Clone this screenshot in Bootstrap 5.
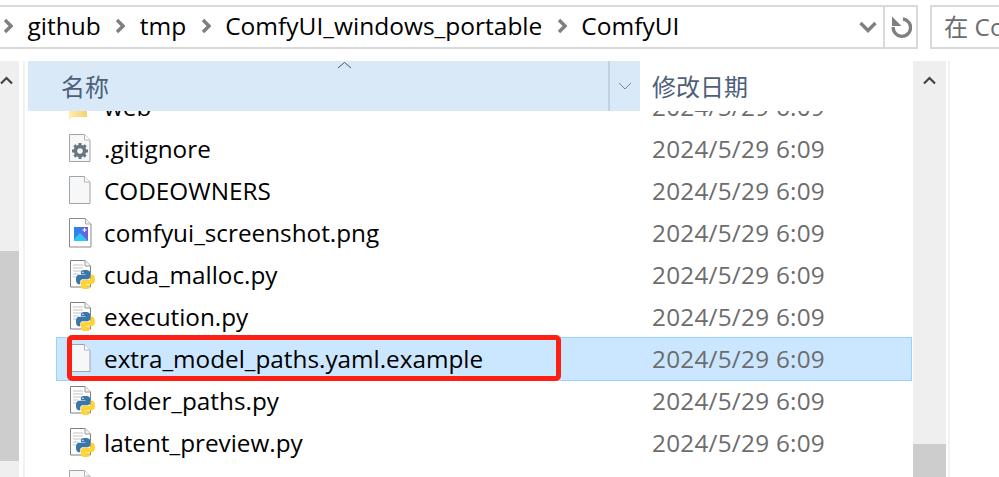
<!DOCTYPE html>
<html lang="zh">
<head>
    <meta charset="UTF-8">
    <meta name="viewport" content="width=device-width, initial-scale=1.0">
    <title>ComfyUI</title>
    <link href="https://cdn.jsdelivr.net/npm/bootstrap@5.3.0/dist/css/bootstrap.min.css" rel="stylesheet">
    <style>
        html, body {
            height: 477px;
            overflow: hidden;
        }
        body {
            background-color: #fff;
            color: #000;
            font-family: "Open Sans", "Noto Sans CJK SC", sans-serif;
            font-size: 24.3px;
        }
        .top-strip {
            height: 61px;
            padding-top: 5px;
        }
        .addr-box {
            width: 918px;
            height: 44px;
            flex: none;
            border: 2px solid #d9d9d9;
            border-left: 0;
        }
        .crumb-sep {
            width: 10px;
            height: 16px;
            flex: none;
        }
        .crumb-list {
            padding-left: 3px;
            padding-bottom: 2px;
            gap: 14.5px;
            font-size: 24.5px;
            white-space: nowrap;
        }
        .addr-tools {
            width: 33px;
            border-left: 2px solid #d9d9d9;
        }
        .addr-menu {
            margin-right: 6px;
        }
        .search-box {
            width: 69px;
            height: 44px;
            flex: none;
            margin-left: 12px;
            border: 2px solid #d9d9d9;
            border-right: 0;
            padding-left: 12px;
            color: #6d6d6d;
            white-space: nowrap;
            overflow: hidden;
        }
        .main-area {
            height: 416px;
        }
        .side-bar {
            width: 19px;
            background-color: #efefef;
        }
        .side-thumb {
            height: 210px;
            margin-top: 190px;
            background-color: #cdcdcd;
        }
        .side-line {
            width: 2px;
            margin-left: 4px;
            margin-right: 3px;
            background-color: #f2f2f2;
        }
        .list-pane {
            width: 885px;
        }
        .col-head {
            height: 50px;
            position: relative;
            z-index: 1;
            background-color: #fff;
        }
        .name-head {
            width: 612px;
            background-color: #d9e9f8;
            color: #4c607a;
            padding-left: 33px;
        }
        .sort-mark {
            position: absolute;
            left: 309px;
            top: 0;
            width: 15px;
            height: 9px;
        }
        .drop-cell {
            width: 32px;
            height: 50px;
            border-left: 2px solid #bfd3e6;
        }
        .date-head {
            padding-left: 12px;
            color: #4c607a;
        }
        .head-text {
            font-size: 24px;
            line-height: 52px;
        }
        .row-list {
            margin-top: -25px;
            margin-left: 28px;
            margin-right: 1px;
        }
        .file-row {
            height: 42px;
            border: 1px solid transparent;
            padding-left: 12px;
            white-space: nowrap;
        }
        .file-row.is-picked {
            height: 44px;
            margin: -1px 0;
            background-color: #cbe6ff;
            border-color: #99d1ff;
        }
        .file-ico {
            width: 26px;
            height: 30px;
            flex: none;
            margin-right: 9px;
        }
        .file-name {
            width: 548px;
            flex: none;
        }
        .file-date {
            color: #6d6d6d;
            letter-spacing: .25px;
        }
        .right-bar {
            width: 33px;
            background-color: #efefef;
        }
        .right-thumb {
            height: 33px;
            margin-top: 383px;
            background-color: #cdcdcd;
        }
        .bar-arrow {
            position: absolute;
            width: 13px;
            height: 9px;
        }
        .arrow-left { left: 0; top: 76px; }
        .arrow-right { left: 923px; top: 76px; }
        .right-line {
            width: 2px;
            margin-left: 2px;
            background-color: #f2f2f2;
        }
        .red-frame {
            position: absolute;
            left: 67px;
            top: 335px;
            width: 494px;
            height: 46px;
            border: 5px solid #ff1f12;
            border-radius: 5px;
            z-index: 2;
        }
    </style>
</head>
<body>
    <svg width="0" height="0" class="position-absolute">
        <defs>
            <linearGradient id="picFill" x1="0" y1="0" x2="1" y2="0">
                <stop offset="0" stop-color="#1c8cf2"/>
                <stop offset="1" stop-color="#7a5ad8"/>
            </linearGradient>
            <linearGradient id="folderFill" x1="0" y1="0" x2="1" y2="0">
                <stop offset="0" stop-color="#ffeeb0"/>
                <stop offset="1" stop-color="#f5d26a"/>
            </linearGradient>
            <symbol id="sep" viewBox="0 0 10 16"><path d="M2 2l6 6-6 6" fill="none" stroke="#7f7f7f" stroke-width="3.400"/></symbol>
            <symbol id="blank" viewBox="0 0 26 30">
                <path d="M.5 .5h15l5.500 5.500v21.500h-20.500z" fill="#f6f7f8" stroke="#a3a3a3"/>
                <path d="M15.500 .5v5.500h5.500" fill="#fff" stroke="#b5b5b5"/>
            </symbol>
            <symbol id="gear" viewBox="0 0 26 30">
                <use href="#blank" width="26" height="30"/>
                <circle cx="11" cy="17" r="4.500" fill="none" stroke="#66777f" stroke-width="3.400"/>
                <path d="M11 9v16M3 17h16M5.300 11.300l11.400 11.400M16.700 11.300L5.300 22.700" stroke="#66777f" stroke-width="3" stroke-dasharray="3 10"/>
            </symbol>
            <symbol id="pic" viewBox="0 0 26 30">
                <path d="M.5 .5h16l5.500 5.500v23h-21.500z" fill="#fff" stroke="#8a8a8a"/>
                <path d="M16.500 .5v5.500h5.500" fill="#f4f4f4" stroke="#aaa"/>
                <rect x="5" y="9" width="14" height="14" fill="url(#picFill)"/>
                <path d="M5 21l6-6 8 8H5z" fill="#2cc6f4"/>
                <path d="M13.500 12h4M15.500 10v4" stroke="#fff" stroke-width="1.200"/>
            </symbol>
            <symbol id="snake" viewBox="0 0 24 24">
                <path d="M11.900 0C5.800 0 6.200 2.600 6.200 2.600v2.700H12v.8H3.900S0 5.700 0 11.900s3.400 6 3.400 6h2V15s-.1-3.400 3.400-3.400h5.700s3.200.1 3.200-3.100V3.200S18.200 0 11.900 0zM8.700 1.800a1 1 0 1 1 0 2.100 1 1 0 0 1 0-2.100z" fill="#3a76a8" fill-rule="evenodd"/>
                <path transform="rotate(180 12 12)" d="M11.900 0C5.800 0 6.200 2.600 6.200 2.600v2.700H12v.8H3.900S0 5.700 0 11.900s3.400 6 3.400 6h2V15s-.1-3.400 3.400-3.400h5.700s3.200.1 3.200-3.100V3.200S18.200 0 11.900 0zM8.700 1.800a1 1 0 1 1 0 2.100 1 1 0 0 1 0-2.100z" fill="#ffd43b" fill-rule="evenodd"/>
            </symbol>
            <symbol id="py" viewBox="0 0 26 30">
                <path d="M1.500 .5h14.500l5.500 5.500v21h-20z" fill="#fff" stroke="#7f7f7f"/>
                <path d="M16 .5v5.500h5.500" fill="#f4f4f4" stroke="#999"/>
                <path d="M4 5h10M4 8h10M4 11h14M4 14h5M4 17h3" stroke="#c4c4c4"/>
                <use href="#snake" x="7" y="10" width="19" height="19"/>
            </symbol>
            <symbol id="folder" viewBox="0 0 26 30">
                <path d="M0 18h18v7H3l-3 3z" fill="url(#folderFill)"/>
            </symbol>
        </defs>
    </svg>

    <div class="top-strip d-flex">
        <div class="addr-box d-flex align-items-center justify-content-between">
            <div class="crumb-list d-flex align-items-center">
                <svg class="crumb-sep"><use href="#sep"/></svg>
                <span>github</span>
                <svg class="crumb-sep"><use href="#sep"/></svg>
                <span>tmp</span>
                <svg class="crumb-sep"><use href="#sep"/></svg>
                <span>ComfyUI_windows_portable</span>
                <svg class="crumb-sep"><use href="#sep"/></svg>
                <span>ComfyUI</span>
            </div>
            <div class="d-flex align-items-center h-100">
                <svg class="addr-menu" width="18" height="12" viewBox="0 0 18 12"><path d="M1.500 2l7.500 7.500 7.500-7.500" fill="none" stroke="#7f7f7f" stroke-width="3.400"/></svg>
                <div class="addr-tools h-100 d-flex align-items-center justify-content-center">
                    <svg width="22" height="24" viewBox="0 0 22 24"><path d="M13 4a8.700 8.700 0 1 1-9.800 8" fill="none" stroke="#7f7f7f" stroke-width="3.400"/><path d="M2 1.500v9.500h9.500z" fill="#7f7f7f"/></svg>
                </div>
            </div>
        </div>
        <div class="search-box d-flex align-items-center">在 Co</div>
    </div>

    <div class="main-area d-flex">
        <div class="side-bar"><div class="side-thumb"></div></div>
        <div class="side-line"></div>
        <div class="list-pane overflow-hidden">
            <div class="col-head d-flex">
                <div class="name-head position-relative d-flex justify-content-between">
                    <span class="head-text">名称</span>
                    <svg class="sort-mark" viewBox="0 0 15 9"><path d="M1 7l6.500-5.500L14 7" fill="none" stroke="#555" stroke-width="1"/></svg>
                    <div class="drop-cell d-flex align-items-center justify-content-center">
                        <svg width="14" height="8" viewBox="0 0 14 8"><path d="M1 1l6 6 6-6" fill="none" stroke="#7a8794"/></svg>
                    </div>
                </div>
                <div class="date-head"><span class="head-text">修改日期</span></div>
            </div>
            <div class="row-list" id="rows"></div>
        </div>
        <div class="right-bar"><div class="right-thumb"></div></div>
        <div class="right-line"></div>
    </div>

    <svg class="bar-arrow arrow-left" viewBox="0 0 13 9"><path d="M1 7.500l5.500-5.500 5.500 5.500" fill="none" stroke="#444" stroke-width="2.200"/></svg>
    <svg class="bar-arrow arrow-right" viewBox="0 0 13 9"><path d="M1 7.500l5.500-5.500 5.500 5.500" fill="none" stroke="#444" stroke-width="2.200"/></svg>
    <div class="red-frame"></div>

    <script src="https://cdn.jsdelivr.net/npm/bootstrap@5.3.0/dist/js/bootstrap.bundle.min.js"></script>
    <script>
        const files = [
            ['folder', 'web', '2024/5/29 6:09'],
            ['gear', '.gitignore', '2024/5/29 6:09'],
            ['blank', 'CODEOWNERS', '2024/5/29 6:09'],
            ['pic', 'comfyui_screenshot.png', '2024/5/29 6:09'],
            ['py', 'cuda_malloc.py', '2024/5/29 6:09'],
            ['py', 'execution.py', '2024/5/29 6:09'],
            ['blank', 'extra_model_paths.yaml.example', '2024/5/29 6:09', true],
            ['py', 'folder_paths.py', '2024/5/29 6:09'],
            ['py', 'latent_preview.py', '2024/5/29 6:09'],
            ['blank', 'LICENSE', '2024/5/29 6:09']
        ];
        document.getElementById('rows').innerHTML = files.map(f => `
            <div class="file-row d-flex align-items-center${f[3] ? ' is-picked' : ''}">
                <svg class="file-ico"><use href="#${f[0]}"/></svg>
                <span class="file-name">${f[1]}</span>
                <span class="file-date">${f[2]}</span>
            </div>`).join('');
    </script>
</body>
</html>
